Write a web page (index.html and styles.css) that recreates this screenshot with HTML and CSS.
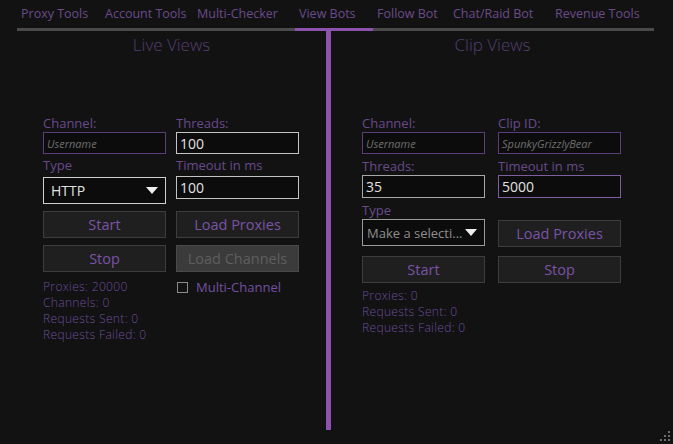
FILE: index.html
```html
<!DOCTYPE html>
<html lang="en">
<head>
<meta charset="utf-8">
<title>View Bots</title>
<link rel="stylesheet" href="styles.css">
</head>
<body>
<div class="window">
  <nav class="tabs">
    <div class="tab">Proxy Tools</div>
    <div class="tab">Account Tools</div>
    <div class="tab">Multi-Checker</div>
    <div class="tab active">View Bots</div>
    <div class="tab">Follow Bot</div>
    <div class="tab">Chat/Raid Bot</div>
    <div class="tab">Revenue Tools</div>
  </nav>

  <main class="main">
    <section class="panel panel-live">
      <h2 class="panel-title">Live Views</h2>
      <div class="form form-live">
        <label class="label">Channel:</label>
        <label class="label">Threads:</label>

        <div class="field field-accent"><span class="placeholder">Username</span></div>
        <div class="field field-light"><span class="value">100</span></div>

        <label class="label">Type</label>
        <label class="label">Timeout in ms</label>

        <div class="select select-light"><span class="value">HTTP</span><span class="arrow"></span></div>
        <div class="field field-light field-tall"><span class="value">100</span></div>

        <button class="btn">Start</button>
        <button class="btn">Load Proxies</button>

        <button class="btn">Stop</button>
        <button class="btn btn-disabled">Load Channels</button>

        <ul class="stats">
          <li>Proxies: 20000</li>
          <li>Channels: 0</li>
          <li>Requests Sent: 0</li>
          <li>Requests Failed: 0</li>
        </ul>
        <div class="check-row"><span class="checkbox"></span><span class="check-label">Multi-Channel</span></div>
      </div>
    </section>

    <div class="divider"></div>

    <section class="panel panel-clip">
      <h2 class="panel-title">Clip Views</h2>
      <div class="form form-clip">
        <label class="label">Channel:</label>
        <label class="label">Clip ID:</label>

        <div class="field field-accent"><span class="placeholder">Username</span></div>
        <div class="field field-accent"><span class="placeholder">SpunkyGrizzlyBear</span></div>

        <label class="label">Threads:</label>
        <label class="label">Timeout in ms</label>

        <div class="field field-grey field-tall"><span class="value">35</span></div>
        <div class="field field-lavender field-tall"><span class="value">5000</span></div>

        <label class="label label-span">Type</label>

        <div class="select select-grey"><span class="value muted">Make a selecti...</span><span class="arrow"></span></div>
        <button class="btn btn-offset">Load Proxies</button>

        <button class="btn">Start</button>
        <button class="btn">Stop</button>

        <ul class="stats">
          <li>Proxies: 0</li>
          <li>Requests Sent: 0</li>
          <li>Requests Failed: 0</li>
        </ul>
      </div>
    </section>
  </main>

  <div class="grip" aria-hidden="true">
    <span></span><span></span><span></span><span></span><span></span><span></span>
  </div>
</div>
</body>
</html>
```

FILE: styles.css
```css
* { box-sizing: border-box; }

html, body {
  margin: 0;
  padding: 0;
  background: #121212;
}

body {
  font-family: "Open Sans", "Noto Sans", sans-serif;
  color: #6d4d90;
}

.window {
  position: relative;
  width: 673px;
  height: 444px;
  overflow: hidden;
  background: #121212;
}

/* ---- tab strip ---- */
.tabs {
  display: grid;
  grid-template-columns: 84px 92px 102px 78px 76px 102px 1fr;
  margin-left: 17px;
  width: 637px;
  height: 31px;
  border-bottom: 3px solid #4a4a4a;
}

.tab {
  padding-left: 4px;
  font-size: 12.5px;
  line-height: 28px;
  white-space: nowrap;
  color: #6a4b8a;
}

.tab.active {
  border-bottom: 3px solid #8c52ad;
  margin-bottom: -3px;
}

/* ---- two panels split by a vertical rule ---- */
.main {
  display: grid;
  grid-template-columns: 326px 5px 1fr;
  height: 399px;
}

.divider {
  background: #8c52ad;
  margin-top: -3px;
}

.panel-live { padding-left: 17px; }
.panel-clip { padding-right: 19px; }

.panel-title {
  margin: 2px 0 0;
  font-size: 17px;
  font-weight: 300;
  line-height: 24px;
  text-align: center;
  color: #553e72;
}

.form {
  display: grid;
  margin-top: 58px;
}

.form-live {
  margin-left: 26px;
  grid-template-columns: 123px 123px;
  column-gap: 10px;
  grid-template-rows: 17px 22px 22px 35px 34px 34px auto;
}

.form-clip {
  margin-left: 31px;
  grid-template-columns: 123px 123px;
  column-gap: 13px;
  grid-template-rows: 17px 22px 21px 23px 21px 37px 27px auto;
}

.label {
  align-self: end;
  font-size: 13px;
  line-height: 17px;
  color: #684a8b;
  white-space: nowrap;
}

.form-live .label:nth-of-type(3),
.form-live .label:nth-of-type(4) { align-self: center; }

.label-span { grid-column: 1 / span 2; }

/* ---- text fields ---- */
.field {
  display: flex;
  align-items: center;
  height: 22px;
  padding-left: 3px;
  background: #0c0c0c;
  border: 1px solid #bdbdbd;
  align-self: start;
}

.field-tall { height: 23px; }
.field-accent { border-color: #5b3d7c; }
.field-light { border-color: #c4c4c4; }
.field-grey { border-color: #a8a8a8; }
.field-lavender { border-color: #7d5ea0; }

.value {
  font-size: 14px;
  color: #e2e2e2;
  white-space: nowrap;
}

.value.muted { color: #8e8e8e; font-size: 13px; }

.placeholder {
  font-size: 11px;
  font-style: italic;
  color: #6f6f6f;
  white-space: nowrap;
}

/* ---- dropdowns ---- */
.select {
  display: flex;
  align-items: center;
  justify-content: space-between;
  height: 27px;
  padding: 0 7px 0 7px;
  background: #0c0c0c;
  border: 1px solid #cfcfcf;
  align-self: start;
}

.form-live .select { margin-top: 1px; }

.select-grey { border-color: #9a9a9a; padding-left: 4px; }

.arrow {
  width: 0;
  height: 0;
  border-left: 6px solid transparent;
  border-right: 6px solid transparent;
  border-top: 7px solid #eeeeee;
}

/* ---- buttons ---- */
.btn {
  height: 27px;
  padding: 0;
  font-family: inherit;
  font-size: 14.5px;
  color: #7a54a6;
  background: #1f1f1f;
  border: 1px solid #3d3d3d;
  align-self: start;
}

.btn-offset { margin-top: 1px; }

.btn-disabled {
  color: #5e5e5e;
  background: #3b3b3b;
  border-color: #4a4a4a;
}

/* ---- counters ---- */
.stats {
  list-style: none;
  margin: 0;
  padding: 0;
  font-size: 12px;
  letter-spacing: 0.35px;
  font-weight: 300;
  line-height: 16px;
  color: #6c4c9c;
  white-space: nowrap;
}

.form-live .stats { margin-top: 0; }
.form-clip .stats { margin-top: 5px; }

.check-row {
  display: flex;
  align-items: center;
  gap: 8px;
  height: 16px;
  padding-left: 1px;
}

.checkbox {
  width: 11px;
  height: 11px;
  border: 1px solid #8a8a8a;
}

.check-label {
  font-size: 13px;
  color: #7550a2;
}

/* ---- resize grip in the window corner ---- */
.grip {
  position: absolute;
  right: 3px;
  bottom: 3px;
  width: 10px;
  height: 10px;
}

.grip span {
  position: absolute;
  width: 2px;
  height: 2px;
  background: #6e6e6e;
}

.grip span:nth-child(1) { right: 0; bottom: 8px; }
.grip span:nth-child(2) { right: 4px; bottom: 4px; }
.grip span:nth-child(3) { right: 0; bottom: 4px; }
.grip span:nth-child(4) { right: 8px; bottom: 0; }
.grip span:nth-child(5) { right: 4px; bottom: 0; }
.grip span:nth-child(6) { right: 0; bottom: 0; }
```
